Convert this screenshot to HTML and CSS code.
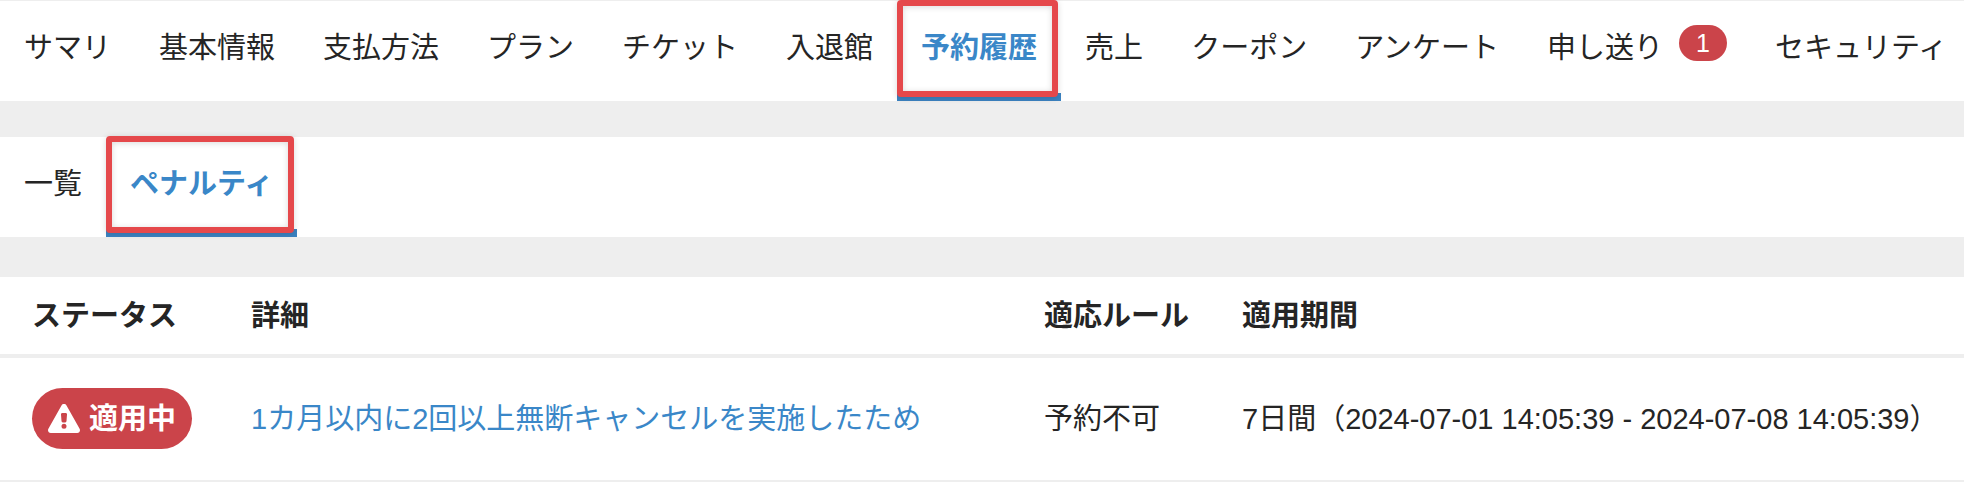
FILE: index.html
```
<!DOCTYPE html>
<html lang="ja">

<head>
    <meta charset="UTF-8">
    <meta name="viewport" content="width=device-width, initial-scale=1.0">
    <title>予約履歴 - ペナルティ</title>
    <link rel="stylesheet" href="styles.css">
</head>

<body>
    <nav class="tabs tabs-main">
        <a class="tab" href="#">サマリ</a>
        <a class="tab" href="#">基本情報</a>
        <a class="tab" href="#">支払方法</a>
        <a class="tab" href="#">プラン</a>
        <a class="tab" href="#">チケット</a>
        <a class="tab" href="#">入退館</a>
        <a class="tab active marked" href="#">予約履歴</a>
        <a class="tab" href="#">売上</a>
        <a class="tab" href="#">クーポン</a>
        <a class="tab" href="#">アンケート</a>
        <a class="tab" href="#">申し送り<span class="badge">1</span></a>
        <a class="tab" href="#">セキュリティ</a>
    </nav>

    <nav class="tabs tabs-sub">
        <a class="tab" href="#">一覧</a>
        <a class="tab active marked" href="#">ペナルティ</a>
    </nav>

    <table class="penalty-table">
        <thead>
            <tr>
                <th class="col-status">ステータス</th>
                <th class="col-detail">詳細</th>
                <th class="col-rule">適応ルール</th>
                <th>適用期間</th>
            </tr>
        </thead>
        <tbody>
            <tr>
                <td>
                    <span class="status">
                        <svg class="status-icon" viewBox="0 0 32 29" aria-hidden="true">
                            <path fill="currentColor" fill-rule="evenodd" d="M16 0c1 0 2 .5 2.500 1.400l13.100 23.400c1.100 2-.2 4.200-2.400 4.200H2.800C.6 29-.7 26.800.4 24.800L13.500 1.400C14 .5 15 0 16 0zM14.400 9c-.9 0-1.500.7-1.400 1.500l.5 6.600c.1.800.6 1.300 1.300 1.300h2.400c.7 0 1.200-.5 1.300-1.300l.5-6.600c.1-.8-.5-1.500-1.400-1.500zM16 19.800a2.500 2.500 0 1 0 0 5 2.500 2.500 0 0 0 0-5z"/>
                        </svg>
                        適用中
                    </span>
                </td>
                <td><a class="detail-link" href="#">1カ月以内に2回以上無断キャンセルを実施したため</a></td>
                <td>予約不可</td>
                <td>7日間（2024-07-01 14:05:39 - 2024-07-08 14:05:39）</td>
            </tr>
        </tbody>
    </table>
</body>

</html>
```
FILE: styles.css
```
* {
    box-sizing: border-box;
}

body {
    margin: 0;
    background-color: #eee;
    color: #252525;
    font-family: "Liberation Sans", "Noto Sans CJK JP", sans-serif;
    font-size: 29px;
    line-height: 44px;
    overflow-x: hidden;
}

a {
    color: inherit;
    text-decoration: none;
}

.tabs {
    display: flex;
    background-color: #fff;
    white-space: nowrap;
}

.tabs-main {
    margin-top: 1px;
}

.tabs-sub {
    margin-top: 36px;
}

.tab {
    display: flex;
    flex-shrink: 0;
    position: relative;
    padding: 25px 24px 23px;
    border-bottom: 8px solid transparent;
}

.tab.active {
    color: #3a87c8;
    font-weight: bold;
    border-bottom-color: #3b82c0;
}

/* red frame over the selected tab */
.marked::after {
    content: "";
    position: absolute;
    top: -1px;
    right: 3px;
    bottom: -4px;
    left: 0;
    border: 6px solid #e5484b;
    border-radius: 4px;
    box-shadow: 0 1px 6px rgba(0, 0, 0, 0.15), inset 0 1px 6px rgba(0, 0, 0, 0.15);
}

.badge {
    height: 36px;
    margin-top: -1px;
    margin-left: 16px;
    padding: 0 17px;
    border-radius: 18px;
    background-color: #cb444a;
    color: #fff;
    font-size: 25px;
    line-height: 36px;
}

.penalty-table {
    width: 100%;
    margin-top: 40px;
    table-layout: fixed;
    border-collapse: separate;
    border-spacing: 0;
    background-color: #fff;
    white-space: nowrap;
}

.penalty-table th,
.penalty-table td {
    padding: 0 0 0 32px;
    text-align: left;
}

.penalty-table th {
    padding-top: 17px;
    padding-bottom: 16px;
    border-bottom: 4px solid #eee;
}

.penalty-table td {
    padding-top: 30px;
    padding-bottom: 31px;
    border-bottom: 2px solid #eee;
}

.col-status {
    width: 219px;
}

.col-detail {
    width: 793px;
}

.col-rule {
    width: 198px;
}

.status {
    display: flex;
    align-items: center;
    gap: 9px;
    width: max-content;
    height: 61px;
    padding: 0 16px;
    border-radius: 31px;
    background-color: #cb444a;
    color: #fff;
    font-weight: bold;
}

.status-icon {
    width: 32px;
    height: 29px;
}

.detail-link {
    color: #3a87c8;
}
```
